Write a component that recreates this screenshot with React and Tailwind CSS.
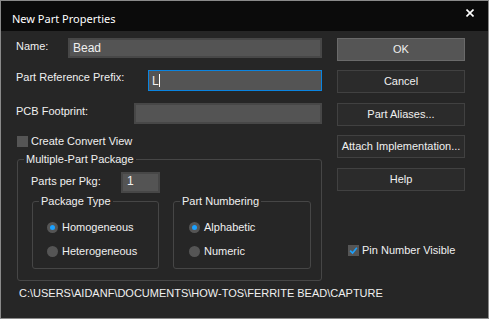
import React from 'react';

const font = { fontFamily: '"Liberation Sans", Arial, sans-serif' };

function Radio({ checked, label }) {
  return (
    <div className="flex items-center h-[14px]">
      <span className="w-[11px] h-[11px] rounded-full bg-[#555555] flex items-center justify-center">
        {checked && <span className="w-[5px] h-[5px] rounded-full bg-[#1ba1ff]" />}
      </span>
      <span className="ml-[4px] leading-[14px]">{label}</span>
    </div>
  );
}

function GroupBox({ title, className, children }) {
  return (
    <fieldset className={`border border-[#464646] rounded-[3px] ${className}`}>
      <legend className="ml-[6px] px-[2px] leading-[13px]">{title}</legend>
      {children}
    </fieldset>
  );
}

function Button({ children, primary, className = '' }) {
  return (
    <div
      className={`h-[23px] w-[128px] flex items-center justify-center border ${
        primary ? 'bg-[#555555] border-[#6a6a6a]' : 'bg-[#2b2b2b] border-[#414141]'
      } ${className}`}
    >
      {children}
    </div>
  );
}

export default function App() {
  return (
    <div
      className="w-[489px] h-[319px] border border-[#8a8a8a] bg-[#262626] text-[#f0f0f0] text-[11px] flex flex-col overflow-hidden"
      style={font}
    >
      {/* Title bar */}
      <div className="h-[30px] bg-[#0b0b0b] flex items-center justify-between pl-[11px] pr-[14px] shrink-0">
        <span className="text-[11px] text-white pt-[7px]" style={{ fontFamily: '"Noto Sans", "Open Sans", sans-serif' }}>
          New Part Properties
        </span>
        <svg width="8" height="8" viewBox="0 0 8 8" className="mb-[6px]">
          <path d="M0.5 0.5 L7.5 7.5 M7.5 0.5 L0.5 7.5" stroke="#ffffff" strokeWidth="1.6" />
        </svg>
      </div>

      {/* Body */}
      <div className="flex pt-[7px] pl-[15px]">
        {/* Left column */}
        <div className="w-[306px] flex flex-col">
          <div className="flex h-[20px]">
            <span className="w-[52px] leading-[14px] mt-[1px]">Name:</span>
            <div className="flex-1 bg-[#545454] border-2 border-[#474747] flex items-center pl-[3px] text-[12px]">Bead</div>
          </div>

          <div className="flex h-[21px] mt-[12px]">
            <span className="w-[132px] leading-[14px]">Part Reference Prefix:</span>
            <div className="flex-1 bg-[#545454] border border-[#0a84e0] flex items-center pl-[3px] text-[12px]">
              L<span className="w-px h-[13px] bg-white" />
            </div>
          </div>

          <div className="flex h-[21px] mt-[12px]">
            <span className="w-[118px] leading-[14px] mt-[1px]">PCB Footprint:</span>
            <div className="flex-1 bg-[#545454] border-2 border-[#474747]" />
          </div>

          <div className="flex items-center h-[11px] mt-[12px] pl-[1px]">
            <span className="w-[11px] h-[11px] bg-[#555555]" />
            <span className="ml-[3px] leading-[13px]">Create Convert View</span>
          </div>

          <GroupBox title="Multiple-Part Package" className="ml-[1px] w-[305px] h-[128px] mt-[6px]">
            <div className="flex items-center mt-[6px] pl-[13px]">
              <span className="w-[90px] leading-[14px] mb-[3px]">Parts per Pkg:</span>
              <div className="w-[39px] h-[21px] bg-[#545454] border-2 border-[#474747] pl-[4px] text-[12px] leading-[15px]">1</div>
            </div>
            <div className="flex mt-[2px] pl-[14px]">
              <GroupBox title="Package Type" className="w-[127px] h-[74px]">
                <div className="flex flex-col gap-[10px] pl-[14px] pt-[12px]">
                  <Radio checked label="Homogeneous" />
                  <Radio label="Heterogeneous" />
                </div>
              </GroupBox>
              <GroupBox title="Part Numbering" className="w-[138px] h-[74px] ml-[14px]">
                <div className="flex flex-col gap-[10px] pl-[15px] pt-[12px]">
                  <Radio checked label="Alphabetic" />
                  <Radio label="Numeric" />
                </div>
              </GroupBox>
            </div>
          </GroupBox>
        </div>

        {/* Right column */}
        <div className="ml-[15px] flex flex-col">
          <Button primary>OK</Button>
          <Button className="mt-[9px]">Cancel</Button>
          <Button className="mt-[10px]">Part Aliases...</Button>
          <Button className="mt-[9px]">Attach Implementation...</Button>
          <Button className="mt-[10px]">Help</Button>
          <div className="flex items-center mt-[53px] pl-[11px]">
            <span className="w-[11px] h-[11px] bg-[#555555] flex items-center justify-center">
              <svg width="9" height="9" viewBox="0 0 9 9">
                <path d="M1.2 4.6 L3.6 7 L7.8 1.8" stroke="#1ba1ff" strokeWidth="1.6" fill="none" />
              </svg>
            </span>
            <span className="ml-[3px] leading-[13px]">Pin Number Visible</span>
          </div>
        </div>
      </div>

      <div className="pl-[18px] mt-[5px] leading-[14px]">C:\USERS\AIDANF\DOCUMENTS\HOW-TOS\FERRITE BEAD\CAPTURE</div>
    </div>
  );
}
